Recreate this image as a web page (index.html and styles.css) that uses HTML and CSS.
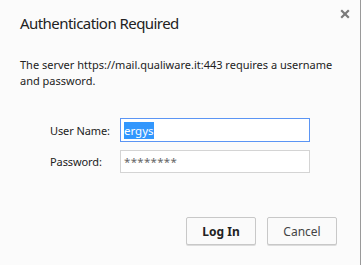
FILE: index.html
```html
<!DOCTYPE html>
<html>
<head>
<meta charset="utf-8">
<link rel="stylesheet" href="styles.css">
</head>
<body>
<div class="dialog">
  <div class="header">
    <h1 class="title">Authentication Required</h1>
    <span class="close" aria-label="Close">
      <svg width="10" height="10" viewBox="0 0 10 10"><path d="M1.2 1.2 L8.8 8.8 M8.8 1.2 L1.2 8.8" stroke="#7b7b7b" stroke-width="2.2"/></svg>
    </span>
  </div>
  <p class="message">The server https://mail.qualiware.it:443 requires a username and password.</p>
  <div class="form">
    <div class="row">
      <span class="label">User Name:</span>
      <div class="input focused"><span class="selected">ergys</span></div>
    </div>
    <div class="row">
      <span class="label">Password:</span>
      <div class="input short"><span class="dots">********</span></div>
    </div>
  </div>
  <div class="buttons">
    <button class="btn primary">Log In</button>
    <button class="btn">Cancel</button>
  </div>
</div>
</body>
</html>
```

FILE: styles.css
```css
html, body {
  margin: 0;
  padding: 0;
  background: #fbfbfb;
}
body {
  width: 361px;
  height: 265px;
  overflow: hidden;
  font-family: "Noto Sans", "Open Sans", sans-serif;
  color: #222;
}
.dialog {
  box-sizing: border-box;
  width: 361px;
  height: 265px;
  border-right: 1px solid #9a9a9a;
  padding: 0 0 0 20px;
}
.header {
  display: flex;
  justify-content: space-between;
  align-items: flex-start;
  height: 46px;
}
.title {
  margin: 12px 0 0 0;
  font-size: 15px;
  font-weight: normal;
  letter-spacing: -0.55px;
  line-height: 22px;
  color: #222;
}
.close {
  display: block;
  margin: 9px 10px 0 0;
  width: 10px;
  height: 10px;
}
.close svg { display: block; }
.message {
  margin: 11px 0 0 0;
  font-size: 11px;
  letter-spacing: 0;
  line-height: 16px;
  width: 330px;
  color: #222;
}
.form {
  margin: 29px 0 0 30px;
  display: flex;
  flex-direction: column;
  gap: 8px;
}
.row {
  display: flex;
  align-items: center;
}
.label {
  width: 70px;
  font-size: 11px;
  letter-spacing: -0.1px;
  color: #222;
}
.input {
  box-sizing: border-box;
  width: 190px;
  height: 24px;
  border: 1px solid #d4d4d4;
  background: #fff;
  display: flex;
  align-items: center;
  padding-left: 3px;
  font-size: 11.5px;
}
.input.short {
  height: 23px;
}
.input.focused {
  border-color: #5b95f4;
}
.selected {
  background: #3297fd;
  color: #fff;
  line-height: 17px;
}
.dots {
  color: #666;
  letter-spacing: 0.3px;
}
.buttons {
  display: flex;
  justify-content: flex-end;
  gap: 11px;
  margin: 44px 23px 0 0;
}
.btn {
  box-sizing: border-box;
  width: 70px;
  height: 28px;
  border: 1px solid #c8c8c8;
  border-radius: 2px;
  background: #fafafa;
  box-shadow: 0 1px 0 rgba(0,0,0,0.12);
  font-family: "Noto Sans", "Open Sans", sans-serif;
  font-size: 12px;
  color: #444;
  padding: 0;
}
.btn.primary {
  font-weight: bold;
  color: #222;
}
```
